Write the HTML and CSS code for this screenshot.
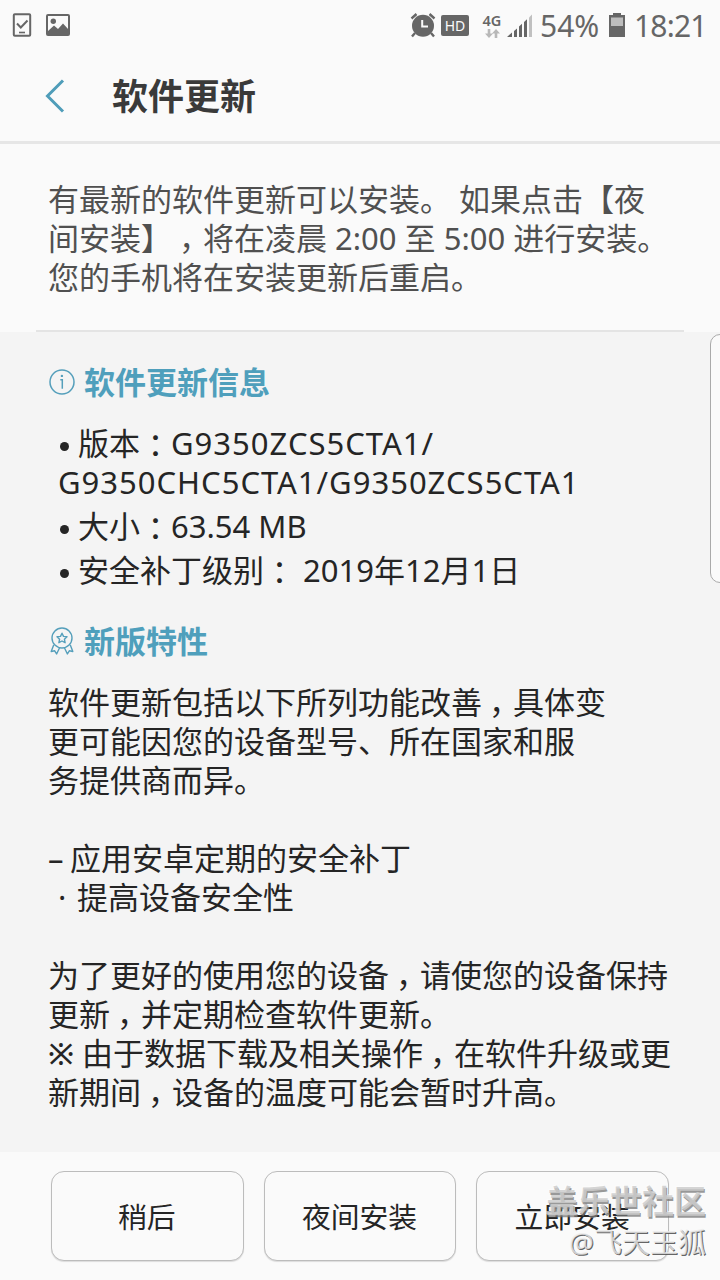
FILE: index.html
```html
<!DOCTYPE html>
<html lang="zh-CN">
<head>
    <meta charset="UTF-8">
    <title>软件更新</title>
    <link rel="stylesheet" href="styles.css">
</head>
<body>

<div class="screen">
    <div class="status-bar">
        <svg class="icon-device" width="20" height="24" viewBox="0 0 20 24">
            <rect x="1.8" y="1.2" width="16.4" height="21.6" rx="1" fill="none" stroke="#666" stroke-width="2"/>
            <path d="M5 10.5l3.8 4 6.7-7" fill="none" stroke="#666" stroke-width="2"/>
            <path d="M7 19.5h6" stroke="#666" stroke-width="1.6"/>
        </svg>
        <svg class="icon-picture" width="24" height="22" viewBox="0 0 24 22">
            <rect x="1" y="1" width="22" height="20" rx="1" fill="none" stroke="#666" stroke-width="2"/>
            <circle cx="7.3" cy="7.2" r="2.7" fill="#666"/>
            <path d="M2 17l6-5.5 4 3.5 5-5.5 5.500 6V21H2z" fill="#666"/>
        </svg>
        <div class="status-right">
            <svg class="icon-alarm" width="26" height="26" viewBox="0 0 26 26">
                <circle cx="13" cy="13.8" r="11" fill="#666"/>
                <path d="M1.500 6.500L6.500 2M24.500 6.500L19.500 2M5 21l-3 3.500M21 21l3 3.500" stroke="#666" stroke-width="2.4"/>
                <path d="M12.200 8v6.500H18" fill="none" stroke="#fafafa" stroke-width="2"/>
            </svg>
            <span class="hd">HD</span>
            <span class="network">
                <span class="network-type">4G</span>
                <svg width="15" height="9" viewBox="0 0 15 9">
                    <path d="M2.700 0h2.600v4.500H8L4 9 0 4.500h2.700zM9.700 9h2.600V4.500H15L11 0 7 4.500h2.700z" fill="#b8b8b8"/>
                </svg>
            </span>
            <svg class="icon-signal" width="26" height="23" viewBox="0 0 26 23">
                <path d="M0 23L5 18.500V23zM7 23v-6l3-2.600V23zM12 23V12.500l3-2.700V23zM17 23V8l3-2.700V23z" fill="#666"/>
                <path d="M22 23V3.500L25 .5V23z" fill="#c0c0c0"/>
            </svg>
            <span class="percent">54%</span>
            <svg class="icon-battery" width="16" height="24" viewBox="0 0 16 24">
                <path d="M4 0h8v2h4v22H0V2h4z" fill="#666"/>
                <rect x="2" y="4.500" width="12" height="8.500" fill="#bdbdbd"/>
            </svg>
            <span class="clock">18:21</span>
        </div>
    </div>

    <div class="title-bar">
        <svg class="icon-back" width="20" height="34" viewBox="0 0 20 34">
            <path d="M18 1.500L2.500 17 18 32.500" fill="none" stroke="#4f9db9" stroke-width="3"/>
        </svg>
        <h1>软件更新</h1>
    </div>

    <div class="notice">
        <p>有最新的软件更新可以安装。 如果点击【夜<br>间安装】<span class="comma">，</span>将在凌晨 2:00 至 5:00 进行安装。<br>您的手机将在安装更新后重启。</p>
    </div>

    <div class="details">
        <h2 class="info-title">
            <svg width="26" height="26" viewBox="0 0 26 26">
                <circle cx="13" cy="13" r="12" fill="none" stroke="#559fbb" stroke-width="1.500"/>
                <path d="M11.300 10.700h2v9" fill="none" stroke="#559fbb" stroke-width="1.500"/>
                <circle cx="12.900" cy="6.900" r="1.200" fill="#559fbb"/>
            </svg>
            软件更新信息
        </h2>
        <ul>
            <li>版本<span class="colon" lang="zh-TW">：</span><span class="code">G9350ZCS5CTA1/</span><br><span class="code outdent">G9350CHC5CTA1/G9350ZCS5CTA1</span></li>
            <li>大小<span class="colon" lang="zh-TW">：</span>63.54 MB</li>
            <li>安全补丁级别<span class="colon" lang="zh-TW">：</span> 2019年12月1日</li>
        </ul>

        <h2 class="feature-title">
            <svg width="26" height="28" viewBox="0 0 26 28">
                <g fill="none" stroke="#559fbb" stroke-width="1.400" stroke-linejoin="round">
                    <circle cx="13" cy="11" r="10"/>
                    <path d="M13 6.200l1.500 3.200 3.500.4-2.600 2.400.7 3.500-3.100-1.700-3.100 1.700.7-3.500L8 9.800l3.500-.4z"/>
                    <path d="M4.700 18L2.200 24.500l3.500-.7L7.600 27l3-6.200M21.300 18l2.500 6.500-3.500-.7L18.400 27l-3-6.200"/>
                </g>
            </svg>
            新版特性
        </h2>
        <p class="features">软件更新包括以下所列功能改善<span class="comma">，</span>具体变<br>更可能因您的设备型号、所在国家和服<br>务提供商而异。<br><br><span class="dash">–</span> 应用安卓定期的安全补丁<br><span class="dot">·</span>提高设备安全性<br><br>为了更好的使用您的设备<span class="comma">，</span>请使您的设备保持<br>更新<span class="comma">，</span>并定期检查软件更新。<br><span class="mark">※</span>由于数据下载及相关操作<span class="comma">，</span>在软件升级或更<br>新期间<span class="comma">，</span>设备的温度可能会暂时升高。</p>
    </div>

    <div class="buttons">
        <button>稍后</button>
        <button>夜间安装</button>
        <button>立即安装</button>
    </div>

    <div class="edge-handle"></div>
    <div class="watermark">
        <div class="community">盖乐世社区</div>
        <div class="author">@飞天玉狐</div>
    </div>
</div>

</body>
</html>
```

FILE: styles.css
```css
* { box-sizing: border-box; }
body { margin: 0; background-color: #fafafa; color: #252525; font-family: "Noto Sans", "Noto Sans CJK SC", sans-serif; text-spacing-trim: space-all; }
h1, h2, p, ul { margin: 0; padding: 0; }
svg { display: block; flex-shrink: 0; }
.screen { position: relative; width: 720px; height: 1280px; overflow: hidden; display: flex; flex-direction: column; white-space: nowrap; }

.status-bar { display: flex; align-items: center; height: 50px; padding: 0 14px 0 12px; color: #666; }
.icon-picture { margin-left: 14px; }
.status-right { display: flex; align-items: center; margin-left: auto; }
.icon-alarm { margin-left: -1px; }
.hd { width: 28px; height: 21px; margin-left: 5px; border-radius: 2px; background-color: #666; color: #fafafa; font-size: 14px; line-height: 21px; text-align: center; }
.network { display: flex; flex-direction: column; align-items: center; width: 20px; margin-left: 13px; }
.network-type { font-size: 14.5px; font-weight: 600; line-height: 14px; margin-bottom: 2px; }
.icon-signal { margin: 0 7px 0 5px; }
.percent { width: 61px; padding-top: 1px; font-size: 30px; line-height: 50px; }
.icon-battery { margin: 0 9px 0 8px; }
.clock { width: 72px; padding-top: 1px; font-size: 30px; line-height: 50px; letter-spacing: -0.8px; }

.title-bar { display: flex; align-items: center; height: 94px; padding-left: 45px; border-bottom: 3px solid #e6e6e6; }
.title-bar h1 { margin-left: 47px; padding-top: 2px; color: #3a3a3a; font-size: 36px; font-weight: 700; line-height: 50px; }

.notice { height: 188px; padding: 36px 49px 0 48px; color: #505050; font-size: 31px; line-height: 39px; }
.notice::after { content: ""; display: block; height: 2px; margin: 33px -13px 0 -12px; background-color: #e4e4e4; }

.details { height: 820px; padding: 31px 0 0 48px; background-color: #f4f4f4; font-size: 31px; line-height: 39px; }
h2 { display: flex; align-items: center; gap: 9px; color: #4f9fbc; font-size: 31px; font-weight: 700; line-height: 39px; }
h2 svg { margin: -2px 0 0 1px; }
ul { list-style: none; padding: 22px 0 0 30px; }
li { position: relative; margin-bottom: 5px; }
li::before { content: ""; position: absolute; left: -18px; top: 18px; width: 9px; height: 9px; border-radius: 50%; background-color: #252525; }
.code { letter-spacing: 1px; }
.outdent { margin-left: -20px; }
.feature-title { margin-top: 32px; }
.features { margin-top: 22px; }
.colon { font-family: "Noto Sans CJK TC", sans-serif; line-height: 0; vertical-align: -2px; }
/* half-width comma padded back to a full cell */
.comma { padding: 0 8.5px 0 7px; font-family: "Noto Sans CJK SC", sans-serif; font-feature-settings: "halt"; line-height: 0; }
.dash { display: inline-block; width: 14px; }
.dot { display: inline-block; width: 29px; padding-left: 10px; }
.mark { display: inline-block; width: 34px; font-weight: 500; }

.buttons { display: flex; gap: 20px; padding: 19px 51px 0; }
button { flex: 1; height: 90px; padding: 0 1px 2px 0; border: 1px solid #bcbcbc; border-radius: 13px; background-color: #fafafa; box-shadow: 0 1px 1px rgba(0,0,0,0.12); color: #252525; font-family: inherit; font-size: 28.8px; }

.edge-handle { position: absolute; top: 334px; right: -10px; width: 20px; height: 249px; border: 1px solid #aaa; border-radius: 10px; background-color: #fafafa; }

.watermark { position: absolute; right: 14px; bottom: 17px; text-align: right; }
.community { color: rgba(205,205,205,0.85); font-size: 32px; font-weight: 700; line-height: 40px; text-shadow: 1px 2px 0 rgba(120,120,120,0.75), -1px -1px 0 rgba(255,255,255,0.6); }
.author { color: rgba(235,235,235,0.8); font-size: 28px; line-height: 42px; text-shadow: 1px 1px 0 rgba(80,80,80,0.9); }
```
